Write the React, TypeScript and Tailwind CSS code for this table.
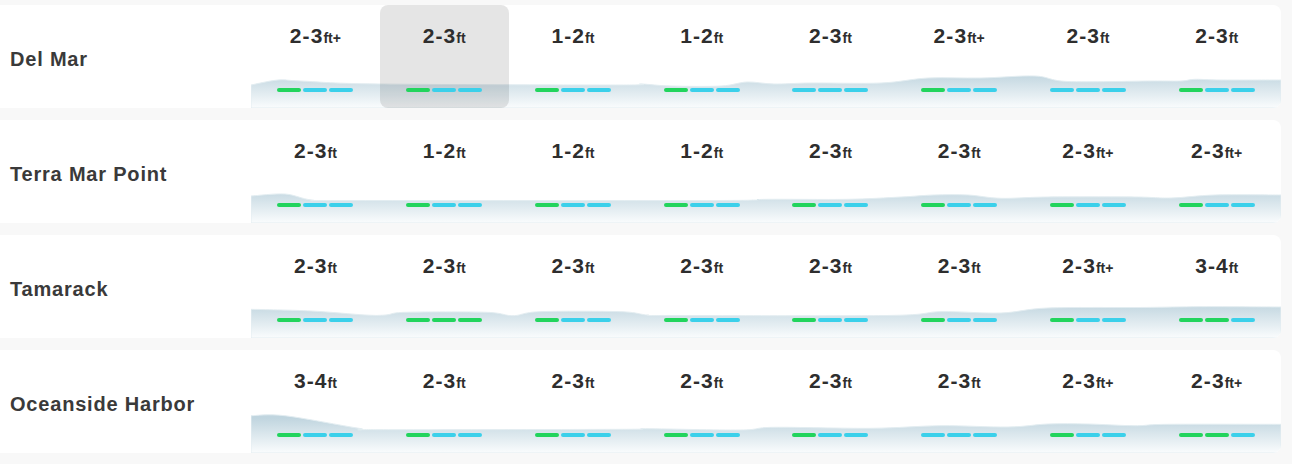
import React from 'react';

type Pt = [number, number];

const spots: { name: string; waves: string[]; bars: string[]; swell: Pt[] }[] = [
  {
    name: 'Del Mar',
    waves: ['2-3+', '2-3', '1-2', '1-2', '2-3', '2-3+', '2-3', '2-3'],
    bars: ['gbb', 'gbb', 'gbb', 'gbb', 'bbb', 'gbb', 'bbb', 'gbb'],
    swell: [
      [0, 80], [27, 75], [50, 76], [128, 79], [369, 80], [390, 79], [420, 81], [470, 81],
      [496, 77], [523, 79], [560, 78], [630, 78], [677, 73], [730, 73], [784, 71], [817, 76.5],
      [900, 76], [930, 76], [944, 74.3], [970, 75], [1030, 75],
    ],
  },
  {
    name: 'Terra Mar Point',
    waves: ['2-3', '1-2', '1-2', '1-2', '2-3', '2-3', '2-3+', '2-3+'],
    bars: ['gbb', 'gbb', 'gbb', 'gbb', 'gbb', 'gbb', 'gbb', 'gbb'],
    swell: [
      [0, 76], [34, 74], [61, 80], [100, 80.5], [462, 80.5], [516, 79.3], [596, 79.3],
      [650, 77], [683, 75], [717, 75], [750, 78.3], [797, 77], [884, 77], [920, 78],
      [964, 75], [1030, 75],
    ],
  },
  {
    name: 'Tamarack',
    waves: ['2-3', '2-3', '2-3', '2-3', '2-3', '2-3', '2-3+', '3-4'],
    bars: ['gbb', 'ggg', 'gbb', 'gbb', 'gbb', 'gbb', 'gbb', 'ggb'],
    swell: [
      [0, 74.3], [60, 76], [114, 80], [135, 80], [155, 77.3], [235, 77.3], [262, 80.7],
      [289, 76.7], [369, 76.7], [396, 80], [420, 80.5], [637, 80.5], [690, 76.7], [750, 78],
      [797, 73], [890, 72.5], [951, 71.7], [1030, 72],
    ],
  },
  {
    name: 'Oceanside Harbor',
    waves: ['3-4', '2-3', '2-3', '2-3', '2-3', '2-3', '2-3+', '2-3+'],
    bars: ['gbb', 'gbb', 'gbb', 'gbb', 'gbb', 'bbb', 'gbb', 'ggb'],
    swell: [
      [0, 65.7], [34, 65.7], [108, 78.3], [128, 79.7], [369, 79.3], [396, 78.7], [489, 80],
      [523, 77.3], [620, 78.3], [690, 75.7], [757, 77], [797, 74], [837, 74], [884, 75.7],
      [917, 74.3], [1030, 74.3],
    ],
  },
];

// catmull-rom -> bezier so the swell line stays soft
const swellPath = (pts: Pt[], h: number) => {
  let d = `M0,${h} L${pts[0][0]},${pts[0][1]}`;
  for (let i = 0; i < pts.length - 1; i++) {
    const p0 = pts[i - 1] || pts[i];
    const p1 = pts[i];
    const p2 = pts[i + 1];
    const p3 = pts[i + 2] || p2;
    const c1x = p1[0] + (p2[0] - p0[0]) / 6;
    const c1y = p1[1] + (p2[1] - p0[1]) / 6;
    const c2x = p2[0] - (p3[0] - p1[0]) / 6;
    const c2y = p2[1] - (p3[1] - p1[1]) / 6;
    d += ` C${c1x},${c1y} ${c2x},${c2y} ${p2[0]},${p2[1]}`;
  }
  return d + ` L1030,${h} Z`;
};

const Swell = ({ pts, id }: { pts: Pt[]; id: string }) => (
  <svg className="absolute inset-0 h-full w-full" viewBox="0 0 1030 103" preserveAspectRatio="none">
    <defs>
      <linearGradient id={id} x1="0" y1="68" x2="0" y2="103" gradientUnits="userSpaceOnUse">
        <stop offset="0" stopColor="#c0d5df" />
        <stop offset="1" stopColor="#fafcfd" />
      </linearGradient>
    </defs>
    <path d={swellPath(pts, 103)} fill={`url(#${id})`} stroke="#e3edf1" strokeWidth="1" />
  </svg>
);

const Height = ({ value }: { value: string }) => {
  const plus = value.endsWith('+');
  const range = plus ? value.slice(0, -1) : value;
  return (
    <div className="h-6 text-[21px] leading-[24px] font-bold tracking-[0.05em] text-[#2e2e2e]">
      {range}
      <span className="text-[14px] leading-none tracking-normal">ft{plus ? '+' : ''}</span>
    </div>
  );
};

const Bars = ({ pattern }: { pattern: string }) => (
  <div className="mt-[40px] flex gap-[2px]">
    {pattern.split('').map((c, i) => (
      <div key={i} className={c === 'g' ? 'h-1 w-6 rounded-full bg-[#22d45d]' : 'h-1 w-6 rounded-full bg-[#3bd0ea]'} />
    ))}
  </div>
);

export default function App() {
  return (
    <div className="min-h-[464px] w-[1292px] bg-[#f8f8f8] pt-[5px] pb-[11px] [font-family:'Liberation_Sans',Arial,sans-serif]">
      <div className="flex w-[1281px] flex-col gap-3">
        {spots.map((s, r) => (
          <div key={s.name} className="flex h-[103px] overflow-hidden rounded-r-lg bg-white">
            <div className="flex w-[251px] shrink-0 items-center pt-[5px] pl-[10px] text-[20px] font-bold tracking-[0.04em] text-[#3a3a3a]">
              {s.name}
            </div>
            <div className="relative grid flex-1 grid-cols-8">
              <Swell pts={s.swell} id={`swell-${r}`} />
              {s.waves.map((w, i) => (
                <div
                  key={i}
                  className={
                    r === 0 && i === 1
                      ? 'relative flex flex-col items-center rounded-lg bg-black/10 pt-[19px]'
                      : 'relative flex flex-col items-center pt-[19px]'
                  }
                >
                  <Height value={w} />
                  <Bars pattern={s.bars[i]} />
                </div>
              ))}
            </div>
          </div>
        ))}
      </div>
    </div>
  );
}
